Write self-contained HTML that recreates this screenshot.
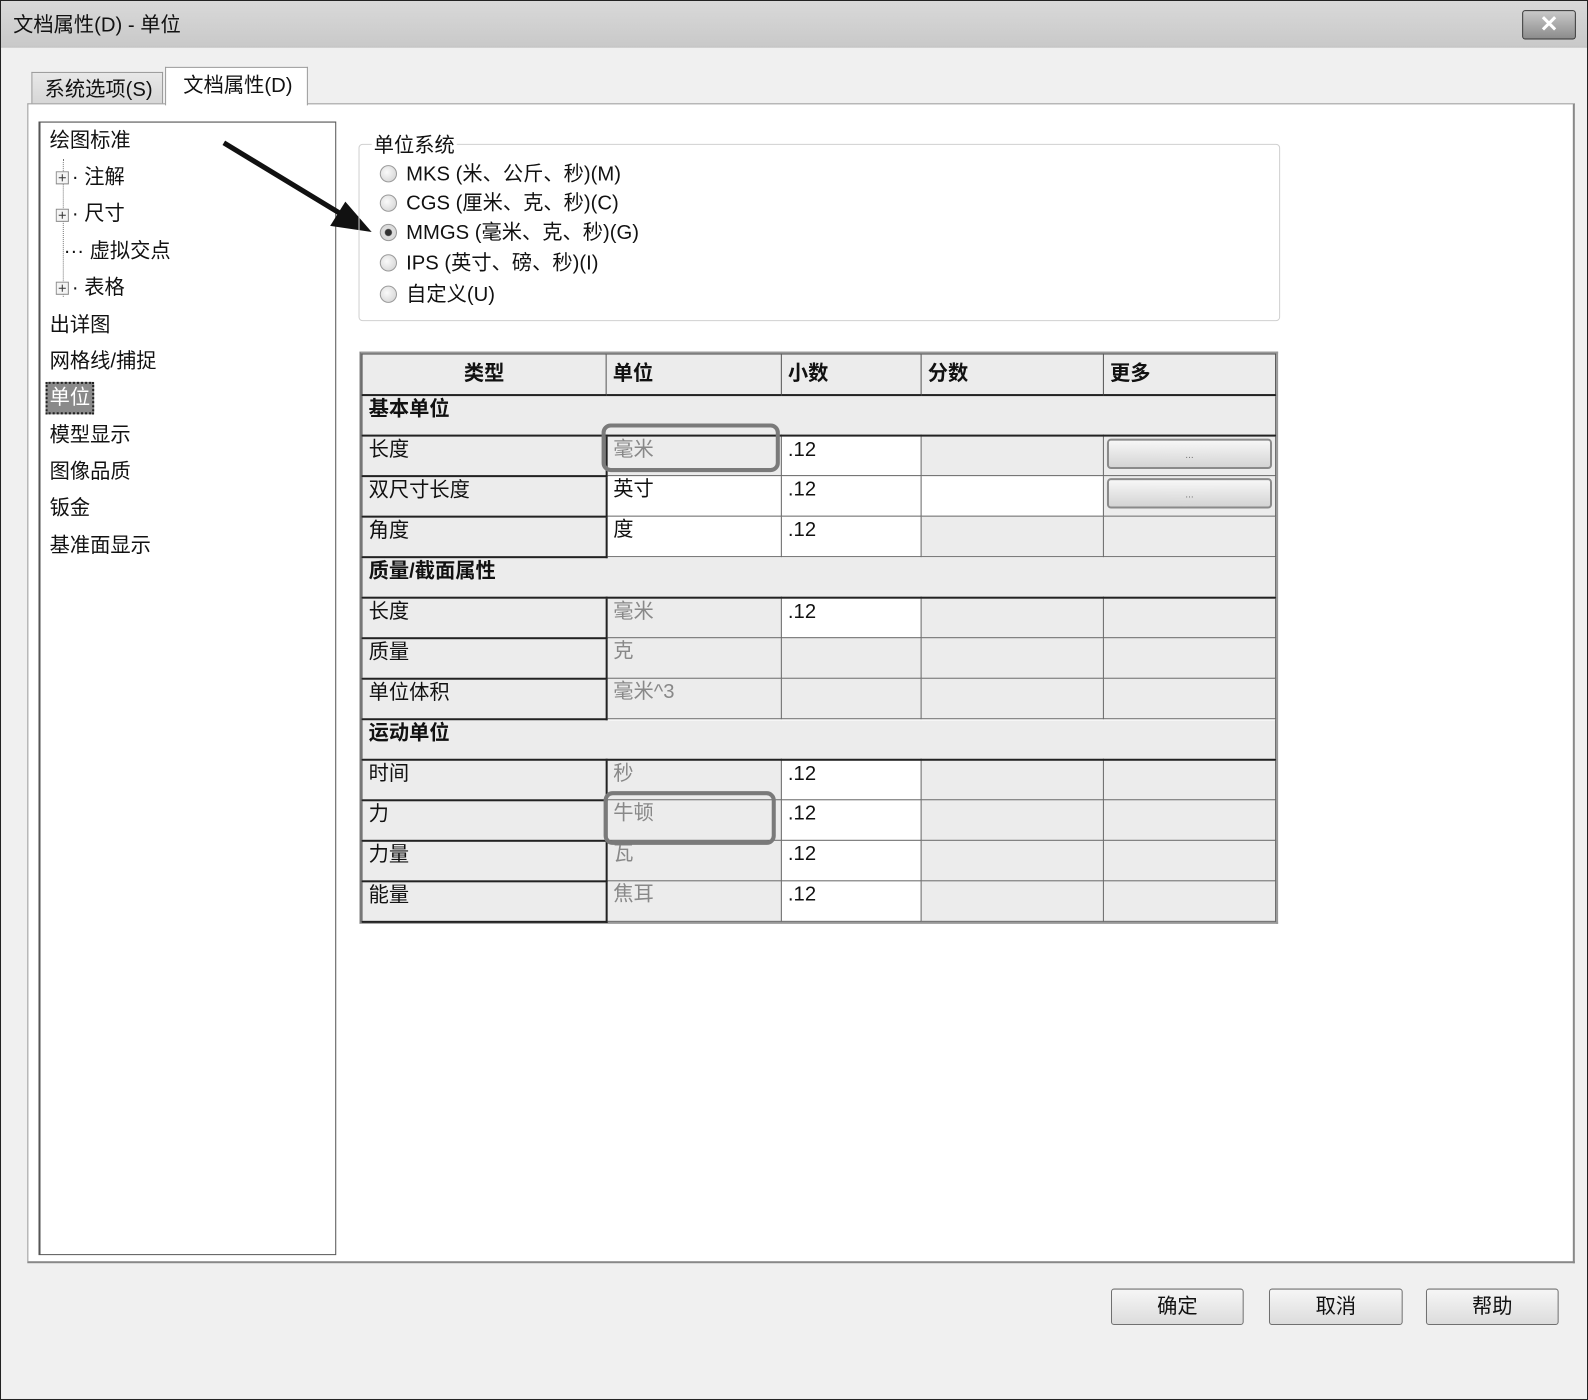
<!DOCTYPE html>
<html><head><meta charset="utf-8">
<style>
html,body{margin:0;padding:0;width:1588px;height:1400px;overflow:hidden;background:#fff;}
#w{position:absolute;left:0;top:0;width:1568px;height:1382px;transform:scale(1.01276,1.01302);transform-origin:0 0;background:#f0f0f0;border:1px solid #222;box-sizing:border-box;font-family:"Liberation Sans","Noto Sans CJK SC",sans-serif;color:#111;}
.a{position:absolute;}
#title{left:0;top:0;width:1566px;height:45px;background:linear-gradient(#d9d9d9,#c9c9c9);border-bottom:1px solid #bbb;}
.t{font-size:20px;line-height:24px;white-space:nowrap;}
.tree div{position:absolute;font-size:20px;line-height:24px;white-space:nowrap;}
.pl{position:absolute;}
.radio{position:absolute;width:17px;height:17px;border-radius:50%;border:1px solid #999;background:radial-gradient(circle at 40% 40%,#fafafa,#cfcfcf);box-sizing:border-box;}
table{border-collapse:collapse;table-layout:fixed;font-size:20px;}
tr{height:40px;}
td{height:39px;box-sizing:border-box;border:1px solid #666;padding:0 0 0 6px;vertical-align:top;line-height:26px;background:#ececec;white-space:nowrap;overflow:hidden;}
td.w{background:#fff;}
td.g{color:#888;}
td.c1{border-bottom:2px solid #222;border-right:2px solid #222;}
th{height:40px;box-sizing:border-box;border:1px solid #555;border-bottom:2px solid #222;background:#ececec;font-weight:bold;text-align:left;padding:6px 0 0 6px;vertical-align:top;font-size:20px;line-height:26px;}
tr.grp td{font-weight:bold;border-bottom:2px solid #222;}
.btn{position:absolute;height:34px;border:1px solid #707070;border-radius:3px;background:linear-gradient(#f6f6f6,#dcdcdc);text-align:center;font-size:20px;line-height:34px;}
.mb{display:block;margin:2px 3px 0 3px;height:30px;box-sizing:border-box;border:2px solid #8a8a8a;border-radius:4px;background:linear-gradient(#f7f7f7,#d4d4d4);text-align:center;font-size:10px;line-height:30px;color:#777;}
.hl{position:absolute;border:4px solid #7a7a7a;border-radius:9px;}
</style></head><body>
<div id="w">
<div id="title" class="a"></div>
<div class="a t" style="left:12px;top:12px;">文档属性(D) - 单位</div>
<div class="a" style="left:1502px;top:9px;width:53px;height:29px;border:1px solid #333;border-radius:3px;background:linear-gradient(#c8c8c8,#8c8c8c);box-sizing:border-box;text-align:center;color:#fff;font-size:22px;line-height:26px;font-weight:bold;">✕</div>

<div class="a" style="left:30px;top:70px;width:130px;height:32px;background:linear-gradient(#e8e8e8,#d6d6d6);border:1px solid #999;border-bottom:none;box-sizing:border-box;"></div>
<div class="a t" style="left:43px;top:76px;">系统选项(S)</div>
<div class="a" style="left:26px;top:101px;width:1528px;height:1145px;background:#fff;border:1px solid #999;box-sizing:border-box;border-bottom:2px solid #888;border-right:2px solid #888;"></div>
<div class="a" style="left:162px;top:65px;width:141px;height:38px;background:#fff;border:1px solid #999;border-bottom:none;box-sizing:border-box;"></div>
<div class="a t" style="left:180px;top:72px;">文档属性(D)</div>

<div class="a" style="left:37px;top:119px;width:294px;height:1119px;border:1px solid #555;border-left-width:2px;background:#fff;box-sizing:border-box;"></div>
<div class="a" style="left:61px;top:156px;height:136px;border-left:1px dotted #777;"></div>
<div class="tree">
<div style="left:48px;top:126px;">绘图标准</div>
<svg class="pl" style="left:54px;top:168px;" width="14" height="14"><rect x="0.5" y="0.5" width="12" height="12" fill="#f4f4f4" stroke="#888"/><path d="M3 6.5H10M6.5 3V10" stroke="#333"/></svg><div style="left:70px;top:162px;">·&nbsp;注解</div>
<svg class="pl" style="left:54px;top:205px;" width="14" height="14"><rect x="0.5" y="0.5" width="12" height="12" fill="#f4f4f4" stroke="#888"/><path d="M3 6.5H10M6.5 3V10" stroke="#333"/></svg><div style="left:70px;top:198px;">·&nbsp;尺寸</div>
<div style="left:62px;top:235px;">···&nbsp;虚拟交点</div>
<svg class="pl" style="left:54px;top:277px;" width="14" height="14"><rect x="0.5" y="0.5" width="12" height="12" fill="#f4f4f4" stroke="#888"/><path d="M3 6.5H10M6.5 3V10" stroke="#333"/></svg><div style="left:70px;top:271px;">·&nbsp;表格</div>
<div style="left:48px;top:308px;">出详图</div>
<div style="left:48px;top:344px;">网格线/捕捉</div>
<div style="left:44px;top:376px;width:48px;height:32px;background:#8a8a8a;border:2px dotted #222;box-sizing:border-box;"></div>
<div style="left:48px;top:380px;color:#fff;">单位</div>
<div style="left:48px;top:417px;">模型显示</div>
<div style="left:48px;top:453px;">图像品质</div>
<div style="left:48px;top:489px;">钣金</div>
<div style="left:48px;top:526px;">基准面显示</div>
</div>

<svg class="a" style="left:0;top:0;" width="1568" height="400">
<line x1="220" y1="140" x2="342" y2="214" stroke="#111" stroke-width="5"/>
<polygon points="366,228 325,222 340,198" fill="#111"/>
</svg>

<div class="a" style="left:353px;top:141px;width:910px;height:175px;border:1px solid #d0d0d0;border-radius:4px;box-sizing:border-box;"></div>
<div class="a t" style="left:366px;top:131px;background:#fff;padding:0 2px;">单位系统</div>
<div class="radio" style="left:374px;top:162px;"></div><div class="a t" style="left:400px;top:159px;">MKS (米、公斤、秒)(M)</div>
<div class="radio" style="left:374px;top:191px;"></div><div class="a t" style="left:400px;top:188px;">CGS (厘米、克、秒)(C)</div>
<div class="radio" style="left:374px;top:220px;background:radial-gradient(circle,#333 0,#333 3px,#e0e0e0 4px,#cfcfcf);"></div><div class="a t" style="left:400px;top:217px;">MMGS (毫米、克、秒)(G)</div>
<div class="radio" style="left:374px;top:250px;"></div><div class="a t" style="left:400px;top:247px;">IPS (英寸、磅、秒)(I)</div>
<div class="radio" style="left:374px;top:281px;"></div><div class="a t" style="left:400px;top:278px;">自定义(U)</div>

<div class="a" style="left:354px;top:346px;width:907px;height:565px;border:2px solid #999;border-left-color:#777;box-sizing:border-box;"></div>
<table class="a" style="left:356px;top:348px;width:902px;">
<colgroup><col style="width:241px"><col style="width:173px"><col style="width:138px"><col style="width:180px"><col style="width:170px"></colgroup>
<tr><th style="text-align:center;padding-left:0;">类型</th><th>单位</th><th>小数</th><th>分数</th><th>更多</th></tr>
<tr class="grp"><td colspan="5">基本单位</td></tr>
<tr><td class="c1">长度</td><td class="g">毫米</td><td class="w">.12</td><td></td><td style="padding:0"><span class="mb">...</span></td></tr>
<tr><td class="c1">双尺寸长度</td><td class="w">英寸</td><td class="w">.12</td><td class="w"></td><td style="padding:0"><span class="mb">...</span></td></tr>
<tr><td class="c1">角度</td><td class="w">度</td><td class="w">.12</td><td></td><td></td></tr>
<tr class="grp"><td colspan="5">质量/截面属性</td></tr>
<tr><td class="c1">长度</td><td class="g">毫米</td><td class="w">.12</td><td></td><td></td></tr>
<tr><td class="c1">质量</td><td class="g">克</td><td></td><td></td><td></td></tr>
<tr><td class="c1">单位体积</td><td class="g">毫米^3</td><td></td><td></td><td></td></tr>
<tr class="grp"><td colspan="5">运动单位</td></tr>
<tr><td class="c1">时间</td><td class="g">秒</td><td class="w">.12</td><td></td><td></td></tr>
<tr><td class="c1">力</td><td class="g">牛顿</td><td class="w">.12</td><td></td><td></td></tr>
<tr><td class="c1">力量</td><td class="g">瓦</td><td class="w">.12</td><td></td><td></td></tr>
<tr><td class="c1">能量</td><td class="g">焦耳</td><td class="w">.12</td><td></td><td></td></tr>
</table>
<div class="hl" style="left:593px;top:417px;width:168px;height:40px;"></div>
<div class="hl" style="left:595px;top:780px;width:162px;height:45px;"></div>

<div class="btn" style="left:1096px;top:1271px;width:129px;">确定</div>
<div class="btn" style="left:1252px;top:1271px;width:130px;">取消</div>
<div class="btn" style="left:1407px;top:1271px;width:129px;">帮助</div>
</div>
</body></html>
